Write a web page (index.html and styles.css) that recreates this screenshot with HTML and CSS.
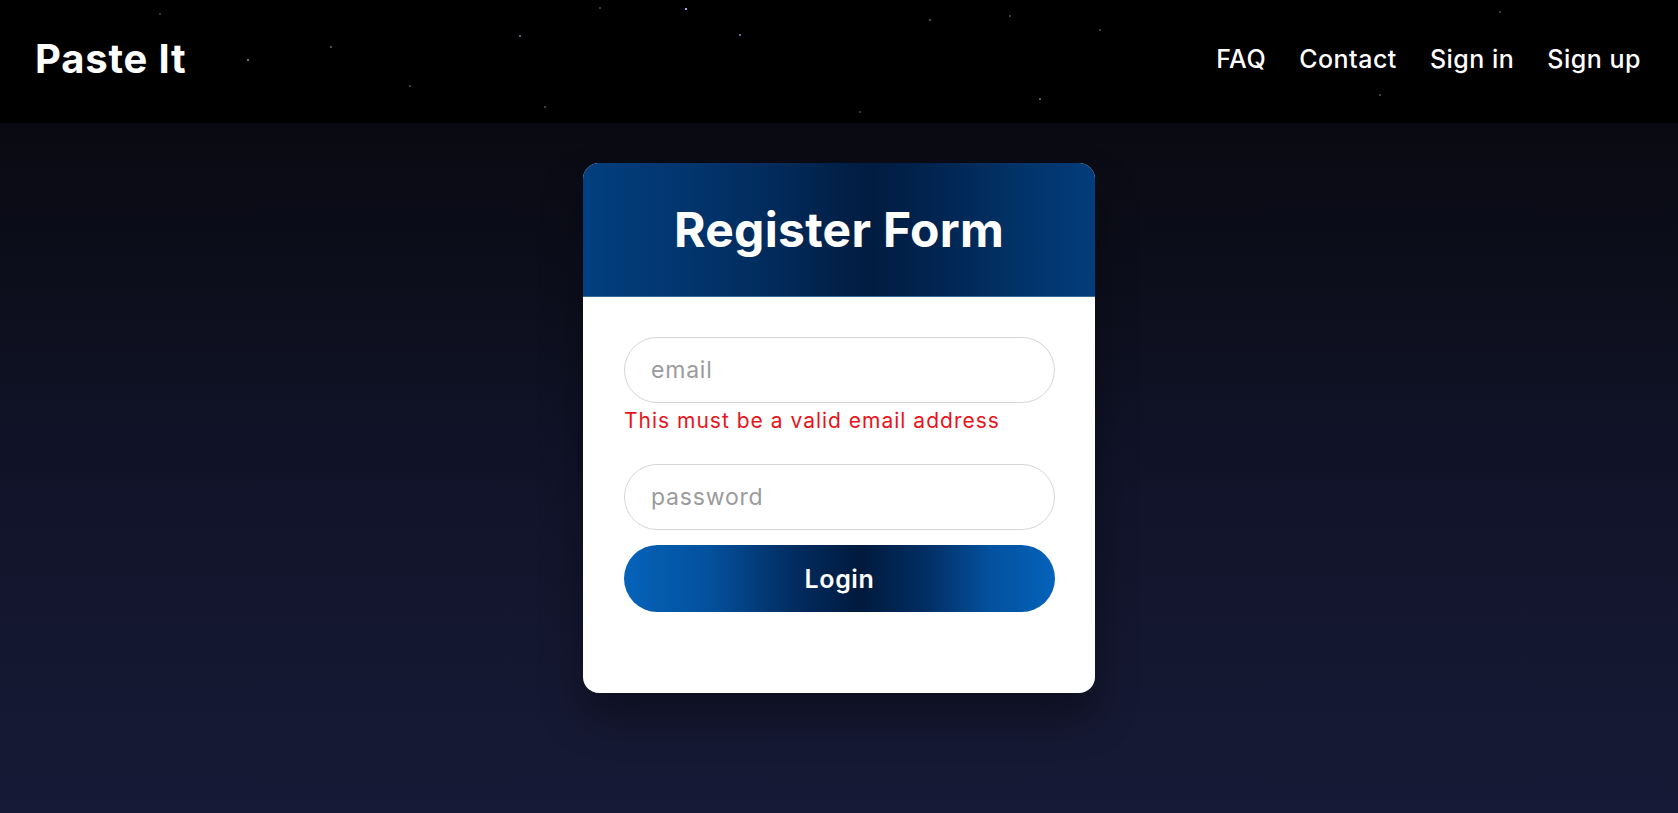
FILE: index.html
```html
<!DOCTYPE html>
<html lang="en">
<head>
<meta charset="utf-8">
<title>Paste It - Register</title>
<link rel="stylesheet" href="styles.css">
</head>
<body>
<header class="topbar">
  <a class="brand" href="#">Paste It</a>
  <nav class="nav">
    <a href="#">FAQ</a>
    <a href="#">Contact</a>
    <a href="#">Sign in</a>
    <a href="#">Sign up</a>
  </nav>
</header>
<main class="page">
  <section class="card">
    <div class="card-head">
      <h1>Register Form</h1>
    </div>
    <form class="card-body">
      <input class="field" type="email" placeholder="email">
      <p class="error">This must be a valid email address</p>
      <input class="field field-pw" type="password" placeholder="password">
      <button class="btn" type="button">Login</button>
    </form>
  </section>
</main>
</body>
</html>
```

FILE: styles.css
```css
* { box-sizing: border-box; }

html, body {
  margin: 0;
  height: 100%;
}

body {
  font-family: Inter, "Noto Sans", sans-serif;
  background: linear-gradient(to bottom, #050509 0%, #0a0b14 20%, #11142a 60%, #161a36 100%);
  min-height: 813px;
  color: #fff;
}

.topbar {
  height: 123px;
  display: flex;
  align-items: center;
  justify-content: space-between;
  padding: 0 37px 6px 35px;
  background-color: #000;
  background-image:
    radial-gradient(circle at 686px 9px, #9da0ff 0 1px, transparent 1.6px),
    radial-gradient(circle at 248px 60px, #6f7088 0 0.8px, transparent 1.4px),
    radial-gradient(circle at 331px 47px, #4a4b5a 0 0.7px, transparent 1.3px),
    radial-gradient(circle at 520px 36px, #5a5c78 0 0.8px, transparent 1.4px),
    radial-gradient(circle at 740px 35px, #6a6d99 0 0.8px, transparent 1.4px),
    radial-gradient(circle at 600px 8px, #3a3b48 0 0.7px, transparent 1.3px),
    radial-gradient(circle at 930px 20px, #4a4c60 0 0.7px, transparent 1.3px),
    radial-gradient(circle at 1040px 99px, #5a5c80 0 0.8px, transparent 1.4px),
    radial-gradient(circle at 545px 107px, #3f4050 0 0.7px, transparent 1.3px),
    radial-gradient(circle at 410px 86px, #3f4050 0 0.7px, transparent 1.3px),
    radial-gradient(circle at 1010px 16px, #3f4050 0 0.7px, transparent 1.3px),
    radial-gradient(circle at 1100px 30px, #3f4050 0 0.7px, transparent 1.3px),
    radial-gradient(circle at 1500px 12px, #3a3b48 0 0.7px, transparent 1.3px),
    radial-gradient(circle at 1380px 95px, #3a3b48 0 0.7px, transparent 1.3px),
    radial-gradient(circle at 160px 14px, #35364a 0 0.7px, transparent 1.3px),
    radial-gradient(circle at 860px 112px, #35364a 0 0.7px, transparent 1.3px);
}

.brand {
  font-size: 40px;
  font-weight: 700;
  color: #fff;
  text-decoration: none;
  letter-spacing: 0.8px;
}

.nav {
  display: flex;
  gap: 33px;
}

.nav a {
  font-size: 25px;
  font-weight: 500;
  color: #fff;
  text-decoration: none;
  letter-spacing: 0.5px;
}

.page {
  display: flex;
  justify-content: center;
  padding-top: 40px;
}

.card {
  width: 512px;
  background: #fff;
  border-radius: 16px;
  overflow: hidden;
  box-shadow: 0 24px 40px rgba(0, 0, 0, 0.35);
}

.card-head {
  height: 134px;
  display: flex;
  align-items: center;
  justify-content: center;
  background: linear-gradient(90deg, #023f7f 0%, #02356e 20%, #022a5a 38%, #011c40 56%, #012552 70%, #023266 84%, #023d7c 100%);
  border-bottom: 1px solid #3a6a9c;
}

.card-head h1 {
  margin: 0;
  font-size: 48px;
  font-weight: 700;
  color: #fff;
  letter-spacing: 0.3px;
}

.card-body {
  display: flex;
  flex-direction: column;
  padding: 40px 40px 81px 41px;
}

.field {
  height: 66px;
  width: 100%;
  border: 1px solid #d6d6d6;
  border-radius: 33px;
  padding: 0 26px;
  font-family: inherit;
  font-size: 23px;
  color: #333;
  background: #fff;
  outline: none;
}

.field::placeholder {
  color: #9b9b9b;
  letter-spacing: 0.8px;
}

.error {
  margin: 3px 0 0;
  line-height: 30px;
  font-size: 21px;
  color: #e8141c;
  letter-spacing: 1px;
}

.field-pw {
  margin-top: 28px;
}

.btn {
  margin-top: 15px;
  height: 67px;
  width: 100%;
  border: none;
  border-radius: 34px;
  font-family: inherit;
  font-size: 25px;
  font-weight: 600;
  color: #fff;
  letter-spacing: 0.6px;
  background: linear-gradient(90deg, #0563ba 0%, #04509c 20%, #022b5f 40%, #011a3d 55%, #022e63 70%, #04519e 85%, #0563ba 100%);
  cursor: pointer;
}
```
